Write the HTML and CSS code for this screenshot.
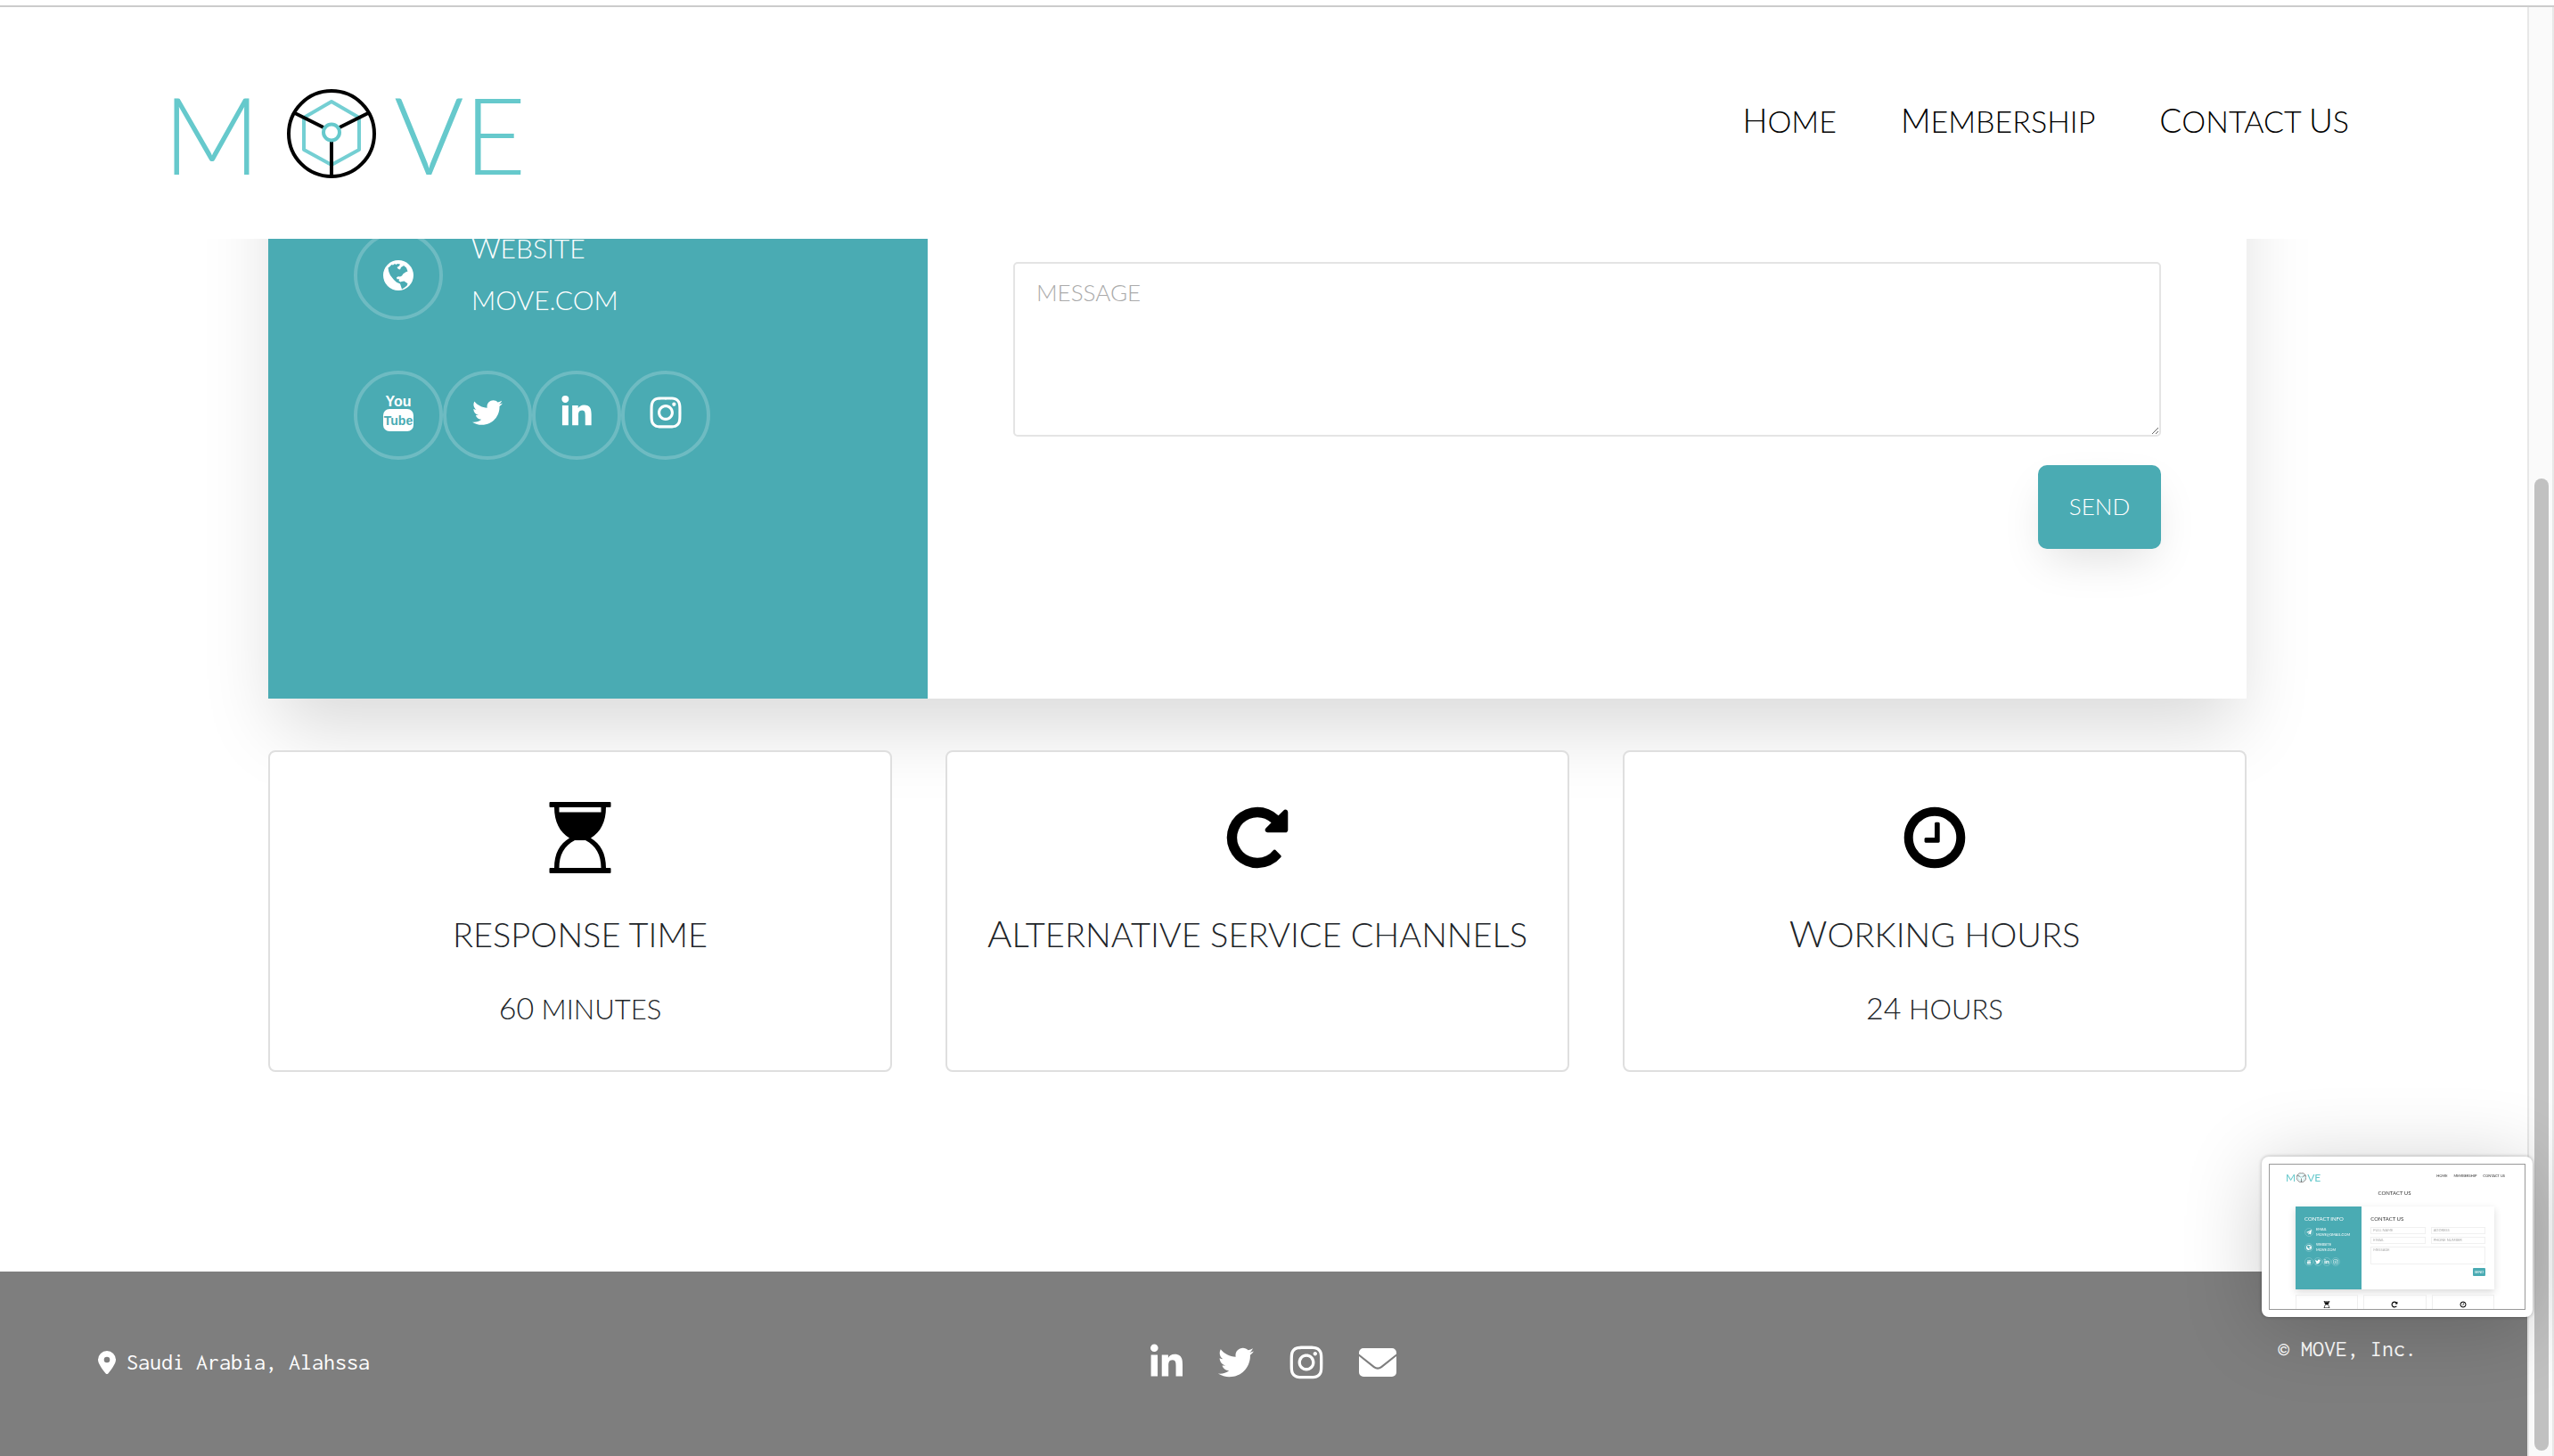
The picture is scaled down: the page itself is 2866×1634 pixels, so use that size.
FILE: index.html
```html
<!DOCTYPE html>
<html lang="en">
<head>
<meta charset="utf-8">
<title>MOVE - Contact Us</title>
<meta name="viewport" content="width=device-width, initial-scale=1">
<link rel="stylesheet" href="styles.css">
</head>
<body>
<svg class="sprite" aria-hidden="true">
  <symbol id="i-in" viewBox="0 0 448 512"><path d="M100.28 448H7.4V148.9h92.88zM53.79 108.1C24.09 108.1 0 83.5 0 53.8a53.79 53.79 0 0 1 107.58 0c0 29.7-24.1 54.3-53.79 54.3zM447.9 448h-92.68V302.4c0-34.7-.7-79.2-48.29-79.2-48.29 0-55.69 37.7-55.69 76.7V448h-92.78V148.9h89.08v40.8h1.3c12.4-23.5 42.69-48.3 87.88-48.3 94 0 111.28 61.9 111.28 142.3V448z"/></symbol>
  <symbol id="i-tw" viewBox="0 0 512 512"><path d="M459.37 151.716c.325 4.548.325 9.097.325 13.645 0 138.72-105.583 298.558-298.558 298.558-59.452 0-114.68-17.219-161.137-47.106 8.447.974 16.568 1.299 25.34 1.299 49.055 0 94.213-16.568 130.274-44.832-46.132-.975-84.792-31.188-98.112-72.772 6.498.974 12.995 1.624 19.818 1.624 9.421 0 18.843-1.3 27.614-3.573-48.081-9.747-84.143-51.98-84.143-102.985v-1.299c13.969 7.797 30.214 12.67 47.431 13.319-28.264-18.843-46.781-51.005-46.781-87.391 0-19.492 5.197-37.36 14.294-52.954 51.655 63.675 129.3 105.258 216.365 109.807-1.624-7.797-2.599-15.918-2.599-24.04 0-57.828 46.782-104.934 104.934-104.934 30.213 0 57.502 12.67 76.67 33.137 23.715-4.548 46.456-13.32 66.599-25.34-7.798 24.366-24.366 44.833-46.132 57.827 21.117-2.273 41.584-8.122 60.426-16.243-14.292 20.791-32.161 39.308-52.628 54.253z"/></symbol>
  <symbol id="i-ig" viewBox="0 0 448 512"><path d="M224.1 141c-63.6 0-114.9 51.3-114.9 114.9s51.3 114.9 114.9 114.9S339 319.5 339 255.9 287.7 141 224.1 141zm0 189.6c-41.1 0-74.7-33.5-74.7-74.7s33.5-74.7 74.7-74.7 74.7 33.5 74.7 74.7-33.6 74.7-74.7 74.7zm146.4-194.3c0 14.9-12 26.8-26.8 26.8-14.9 0-26.8-12-26.8-26.8s12-26.8 26.8-26.8 26.8 12 26.8 26.8zm76.1 27.2c-1.7-35.9-9.9-67.7-36.2-93.9-26.2-26.2-58-34.4-93.9-36.2-37-2.1-147.9-2.1-184.9 0-35.8 1.7-67.6 9.9-93.9 36.1s-34.4 58-36.2 93.9c-2.1 37-2.1 147.9 0 184.9 1.7 35.9 9.9 67.7 36.2 93.9s58 34.4 93.9 36.2c37 2.1 147.9 2.1 184.9 0 35.9-1.7 67.7-9.9 93.9-36.2 26.2-26.2 34.4-58 36.2-93.9 2.1-37 2.1-147.8 0-184.8zM398.8 388c-7.8 19.6-22.9 34.7-42.6 42.6-29.5 11.7-99.5 9-132.1 9s-102.7 2.6-132.1-9c-19.6-7.8-34.7-22.9-42.6-42.6-11.7-29.5-9-99.5-9-132.1s-2.6-102.7 9-132.1c7.8-19.6 22.9-34.7 42.6-42.6 29.5-11.7 99.5-9 132.1-9s102.7-2.6 132.1 9c19.6 7.8 34.7 22.9 42.6 42.6 11.7 29.5 9 99.5 9 132.1s2.7 102.7-9 132.1z"/></symbol>
  <symbol id="i-globe" viewBox="0 0 34 34"><circle cx="17" cy="17" r="17"/><path fill="#4aabb3" d="M5.500 8.500 7 7.500 9.500 5l1.500.5L13 4l1.500 1 1.500-1 3 .6-1 1.900-2.500 1.500 1.500 2 2 .5 1-2.500 2.500-1.500L23 6l3 2.600 1.500 4-2 .6-3 2-1.500 2.200-2 1.200-2-.4-2 1 .5 2 2.500 0-.5 2 2 1.200 1-.5 3-.5 4 2.800-1 2.600-3 2.200-2.500 1.500-1-3-1-3-4-1.800-3-2.700L8 17l-1.700-4z"/></symbol>
  <symbol id="i-yt" viewBox="0 0 40 48"><rect x="3" y="20" width="34" height="25" rx="7"/><text class="yt-you" x="20" y="17" text-anchor="middle">You</text><text class="yt-tube" x="20" y="38" text-anchor="middle">Tube</text></symbol>
  <symbol id="i-mail" viewBox="0 0 42 32"><path d="M5 0h32a5 5 0 0 1 5 5v1.500L24.500 20.200q-3.500 2.600-7 0L0 6.500V5a5 5 0 0 1 5-5zM0 9l16.200 12.900q4.800 3.500 9.600 0L42 9v18a5 5 0 0 1-5 5H5a5 5 0 0 1-5-5z"/></symbol>
  <symbol id="i-pin" viewBox="0 0 20 26"><path fill-rule="evenodd" d="M10 0a10 10 0 0 1 10 10c0 4-4.500 10.500-8.700 15.400a1.700 1.700 0 0 1-2.600 0C4.500 20.500 0 14 0 10A10 10 0 0 1 10 0zm0 6.700a3.300 3.300 0 1 0 0 6.600 3.300 3.300 0 0 0 0-6.600z"/></symbol>
  <symbol id="i-glass" viewBox="0 0 80 80"><path fill-rule="evenodd" d="M6.500 0h67q1 0 1 1v4q0 1-1 1H69c0 16-6 28-17 34.500C63 47 69 58 69 74h4.500q1 0 1 1v4q0 1-1 1h-67q-1 0-1-1v-4q0-1 1-1H11c0-16 6-27 17-33.500C17 34 11 22 11 6H6.500q-1 0-1-1V1q0-1 1-1zM16.500 6v5.500h47V6zM34 43c-12 6-17.500 17-17.500 31h47C63.500 60 58 49 46 43z"/></symbol>
  <symbol id="i-repeat" viewBox="0 0 1792 1792"><path d="M1664 256v448q0 26-19 45t-45 19h-448q-42 0-59-40-17-39 14-69l138-138q-148-137-349-137-104 0-198.500 40.500t-163.500 109.500-109.500 163.500-40.500 198.500 40.500 198.500 109.500 163.500 163.500 109.500 198.500 40.500q119 0 225-52t179-147q7-10 23-12 14 0 25 9l137 138q9 8 9.500 20.500t-7.500 22.500q-109 132-264 204.500t-327 72.500q-156 0-298-61t-245-164-164-245-61-298 61-298 164-245 245-164 298-61q147 0 284.500 55.500t244.500 156.500l130-129q29-31 70-14 39 17 39 59z"/></symbol>
  <symbol id="i-clock" viewBox="0 0 1792 1792"><path d="M1024 544v448q0 14-9 23t-23 9h-320q-14 0-23-9t-9-23v-64q0-14 9-23t23-9h224v-352q0-14 9-23t23-9h64q14 0 23 9t9 23zm416 352q0-148-73-273t-198-198-273-73-273 73-198 198-73 273 73 273 198 198 273 73 273-73 198-198 73-273zm224 0q0 209-103 385.500t-279.500 279.500-385.500 103-385.500-103-279.500-279.500-103-385.500 103-385.500 279.500-279.500 385.500-103 385.500 103 279.500 279.500 103 385.500z"/></symbol>
  <symbol id="i-plane" viewBox="0 0 20 20"><path d="M20 0 17 18l-6-3-3 4v-6l8-9-10 8-6-2z"/></symbol>
  <symbol id="i-wheel" viewBox="0 0 100 100"><g fill="none"><path stroke="#74cfd3" stroke-width="4" stroke-linejoin="round" d="M50 14 81 32V68L50 85 19 68V32z"/><circle cx="50" cy="50" r="48" stroke="#000" stroke-width="4"/><path stroke="#000" stroke-width="4" d="M8 26.500 41 43M92 26.500 59 43M50 59V98"/><circle cx="50" cy="48.500" r="9" stroke="#66c9cc" stroke-width="4" fill="#fff"/></g></symbol>
</svg>

<div class="window">
  <div class="page">
    <header class="header">
      <a class="logo" href="#" aria-label="MOVE"><span>M</span><svg><use href="#i-wheel"/></svg><span>VE</span></a>
      <nav class="nav">
        <a href="#"><b>H</b>ome</a>
        <a href="#"><b>M</b>embership</a>
        <a href="#"><b>C</b>ontact <b>U</b>s</a>
      </nav>
    </header>

    <main class="main">
      <section class="contact">
        <div class="info">
          <div class="info-row">
            <span class="ring ring-plain"><svg class="globe"><use href="#i-globe"/></svg></span>
            <p class="info-text"><b>W</b>ebsite<br>move.com</p>
          </div>
          <div class="socials">
            <a class="ring" href="#" aria-label="YouTube"><svg class="yt"><use href="#i-yt"/></svg></a>
            <a class="ring" href="#" aria-label="Twitter"><svg class="tw"><use href="#i-tw"/></svg></a>
            <a class="ring" href="#" aria-label="LinkedIn"><svg class="in"><use href="#i-in"/></svg></a>
            <a class="ring" href="#" aria-label="Instagram"><svg class="ig"><use href="#i-ig"/></svg></a>
          </div>
        </div>
        <form class="form">
          <textarea class="message" placeholder="MESSAGE" aria-label="Message"></textarea>
          <button class="send" type="button">send</button>
        </form>
      </section>

      <section class="facts">
        <article class="fact">
          <svg><use href="#i-glass"/></svg>
          <h2>response time</h2>
          <p><b>60</b> minutes</p>
        </article>
        <article class="fact">
          <svg><use href="#i-repeat"/></svg>
          <h2><b>A</b>lternative service channels</h2>
        </article>
        <article class="fact">
          <svg><use href="#i-clock"/></svg>
          <h2><b>W</b>orking hours</h2>
          <p><b>24</b> hours</p>
        </article>
      </section>
    </main>

    <footer class="footer">
      <p class="place"><svg><use href="#i-pin"/></svg>Saudi Arabia, Alahssa</p>
      <div class="links">
        <a href="#" aria-label="LinkedIn"><svg class="in"><use href="#i-in"/></svg></a>
        <a href="#" aria-label="Twitter"><svg class="tw"><use href="#i-tw"/></svg></a>
        <a href="#" aria-label="Instagram"><svg class="ig"><use href="#i-ig"/></svg></a>
        <a href="#" aria-label="Email"><svg class="mail"><use href="#i-mail"/></svg></a>
      </div>
      <p class="copy">© MOVE, Inc.</p>
    </footer>
  </div>
  <div class="scroll"><div class="scroll-thumb"></div></div>
</div>

<div class="preview">
  <div class="shot">
    <div class="shot-head">
      <span class="shot-logo">M<svg><use href="#i-wheel"/></svg>VE</span>
      <span class="shot-nav"><span>Home</span><span>Membership</span><span>Contact Us</span></span>
    </div>
    <p class="shot-title">Contact us</p>
    <div class="shot-card">
      <div class="shot-info">
        <p class="shot-h">Contact info</p>
        <div class="shot-row"><i><svg><use href="#i-plane"/></svg></i><span>Email<br>move@gmail.com</span></div>
        <div class="shot-row"><i><svg><use href="#i-globe"/></svg></i><span>Website<br>move.com</span></div>
        <div class="shot-soc"><i><svg><use href="#i-yt"/></svg></i><i><svg><use href="#i-tw"/></svg></i><i><svg><use href="#i-in"/></svg></i><i><svg><use href="#i-ig"/></svg></i></div>
      </div>
      <div class="shot-form">
        <p class="shot-h">Contact us</p>
        <div class="shot-fields"><span>Full name</span><span>Address</span><span>Email</span><span>Phone number</span><span class="wide">Message</span></div>
        <span class="shot-send">send</span>
      </div>
    </div>
    <div class="shot-facts"><span><svg><use href="#i-glass"/></svg></span><span><svg><use href="#i-repeat"/></svg></span><span><svg><use href="#i-clock"/></svg></span></div>
  </div>
</div>
</body>
</html>
```
FILE: styles.css
```css
* { box-sizing: border-box; }

body {
  margin: 0;
  padding-top: 6px;
  background: #fff;
  color: #212529;
  font-family: Lato, "Open Sans", sans-serif;
  font-weight: 300;
}

p, h2 { margin: 0; font-weight: 300; }
a { color: inherit; text-decoration: none; }
b { font-weight: 300; }
svg { display: block; fill: currentColor; }
.sprite { display: none; }

.window {
  display: flex;
  min-height: calc(100vh - 6px);
  border-top: 2px solid #ccc;
}
.page { flex: 1; min-width: 0; display: flex; flex-direction: column; }

/* header */
.header {
  display: flex;
  justify-content: space-between;
  align-items: flex-start;
  height: 260px;
  padding: 82px 200px 0 183px;
}
.logo {
  display: flex;
  align-items: center;
  gap: 20px;
  color: #66c9cc;
  font-size: 120px;
  line-height: 120px;
}
.logo svg { width: 100px; height: 100px; margin-left: 10px; }
.nav {
  display: flex;
  gap: 72px;
  padding-top: 22px;
  color: #000;
  font-size: 34px;
  line-height: 48px;
  text-transform: uppercase;
}
.nav b { font-size: 37px; line-height: 37px; }

/* contact card */
.main { flex: 1; overflow: hidden; padding: 0 14px 224px 0; }
.contact, .facts {
  display: grid;
  width: 100%;
  max-width: 2220px;
  margin: 0 auto;
}
.contact {
  grid-template-columns: 1fr 2fr;
  min-height: 716px;
  margin-top: -200px;
  background: #fff;
  box-shadow: 0 42px 78px -10px rgba(0, 0, 0, .15);
}
.info { padding: 191px 96px 0; background: #4aabb3; color: #fff; }
.info-row { display: flex; align-items: center; gap: 32px; height: 100px; }
.info-text { padding-bottom: 4px; font-size: 30px; line-height: 58px; text-transform: uppercase; }
.info-text b { font-size: 32px; line-height: 32px; }
.ring {
  display: flex;
  flex: none;
  align-items: center;
  justify-content: center;
  width: 100px;
  height: 100px;
  padding-bottom: 6px;
  border: 4px solid rgba(255, 255, 255, .2);
  border-radius: 50%;
}
.ring-plain { padding-bottom: 0; }
.socials { display: flex; margin-top: 57px; }
.globe { width: 34px; height: 34px; }
.yt { width: 40px; height: 48px; }
.yt-you, .yt-tube {
  font-family: "Liberation Sans Narrow", "Liberation Sans", sans-serif;
  font-weight: 700;
  font-size: 16px;
}
.yt-tube { fill: #4aabb3; font-size: 14px; }
.ring .tw, .ring .in { width: 34px; height: 38px; }
.ring .ig { width: 36px; height: 40px; }

.form {
  display: flex;
  flex-direction: column;
  align-items: flex-end;
  padding: 226px 96px 0;
}
.message {
  display: block;
  width: 100%;
  height: 196px;
  padding: 14px 24px;
  border: 2px solid #e4e4e4;
  border-radius: 5px;
  background: #fff;
  font: 300 26px/36px Lato, sans-serif;
}
.message::placeholder { color: #aaa; opacity: 1; }
.send {
  width: 138px;
  height: 94px;
  margin-top: 32px;
  padding: 0 0 2px;
  border: 0;
  border-radius: 10px;
  background: #4aabb3;
  box-shadow: 0 20px 50px -10px rgba(0, 0, 0, .13);
  color: #fff;
  font: 300 26px/36px Lato, sans-serif;
  text-transform: uppercase;
}

/* fact cards */
.facts { grid-template-columns: repeat(3, 1fr); gap: 60px; margin-top: 58px; position: relative; }
.fact {
  padding: 56px 20px 51px;
  border: 2px solid #dfdfdf;
  border-radius: 8px;
  background: #fff;
  text-align: center;
  text-transform: uppercase;
}
.fact svg { width: 80px; height: 80px; margin: 0 auto 46px; color: #000; }
.fact h2 { font-size: 38px; line-height: 44px; }
.fact h2 b { font-size: 42px; line-height: 42px; }
.fact p { margin-top: 44px; font-size: 31px; line-height: 36px; }
.fact p b { font-size: 34px; line-height: 34px; }

/* footer */
.footer {
  display: grid;
  grid-template-columns: 1fr auto 1fr;
  align-items: center;
  height: 207px;
  padding: 0 88px 4px 110px;
  background: #7e7e7e;
  color: #fff;
  font-family: Inconsolata, "DejaVu Sans Mono", monospace;
  font-size: 26px;
}
.footer p { font-weight: 400; }
.place { display: flex; align-items: center; gap: 12px; }
.place svg { width: 20px; height: 26px; }
.links { display: flex; align-items: center; gap: 40px; }
.links .in { width: 36px; height: 42px; }
.links .tw { width: 40px; height: 40px; }
.links .ig { width: 38px; height: 42px; }
.links .mail { width: 42px; height: 32px; }
.copy { padding: 0 36px 30px 0; text-align: right; }

/* scrollbar */
.scroll {
  flex: none;
  width: 30px;
  padding: 529px 4px 6px 6px;
  display: flex;
  border: solid #e8e8e8;
  border-width: 0 2px;
  background: #fafafa;
}
.scroll-thumb { width: 16px; border-radius: 8px; background: #c1c1c1; }

/* floating preview */
.preview {
  position: fixed;
  right: 24px;
  bottom: 156px;
  width: 304px;
  height: 180px;
  padding: 8px;
  border-radius: 8px;
  background: #fff;
  box-shadow: 0 0 4px rgba(0, 0, 0, .3), 0 10px 90px rgba(0, 0, 0, .2);
}
.shot {
  height: 164px;
  overflow: hidden;
  border: 1px solid #999;
  color: #333;
  font-size: 4px;
  font-weight: 400;
  line-height: 6px;
  text-transform: uppercase;
}
.shot p { font-weight: 400; }
.shot svg { width: 6px; height: 6px; }
.shot i { display: flex; align-items: center; justify-content: center; width: 10px; height: 10px; border: 1px solid rgba(255, 255, 255, .2); border-radius: 50%; }
.shot-head { display: flex; justify-content: space-between; padding: 8px 22px 0 18px; }
.shot-logo { display: flex; align-items: center; gap: 1px; color: #66c9cc; font-size: 12px; line-height: 13px; }
.shot .shot-logo svg { width: 11px; height: 11px; }
.shot-nav { display: flex; gap: 7px; padding-top: 2px; }
.shot-title { margin: 7px 6px 0 0; text-align: center; font-size: 6px; line-height: 8px; }
.shot-card {
  display: grid;
  grid-template-columns: 1fr 2fr;
  height: 93px;
  margin: 11px 34px 0 29px;
  box-shadow: 0 3px 8px rgba(0, 0, 0, .15);
}
.shot-h { font-size: 6px; line-height: 8px; }
.shot-info { padding: 10px; background: #4aabb3; color: #fff; }
.shot-row { display: flex; align-items: center; gap: 3px; height: 12px; margin-top: 5px; white-space: nowrap; }
.shot-soc { display: flex; margin-top: 5px; }
.shot-form { padding: 10px; display: flex; flex-direction: column; }
.shot-fields { display: grid; grid-template-columns: 1fr 1fr; gap: 3px 6px; margin-top: 5px; color: #aaa; }
.shot-fields span { height: 8px; padding-left: 2px; border: 1px solid #f0f0f0; }
.shot-fields .wide { grid-column: 1 / 3; height: 20px; }
.shot-send { align-self: flex-end; width: 14px; height: 9px; margin-top: 4px; border-radius: 1px; background: #4aabb3; color: #fff; text-align: center; line-height: 9px; }
.shot-facts { display: grid; grid-template-columns: repeat(3, 1fr); gap: 6px; margin: 6px 34px 0 29px; }
.shot-facts span { height: 40px; padding-top: 6px; border: 1px solid #eee; }
.shot-facts svg { width: 8px; height: 8px; margin: 0 auto; color: #000; }
```
